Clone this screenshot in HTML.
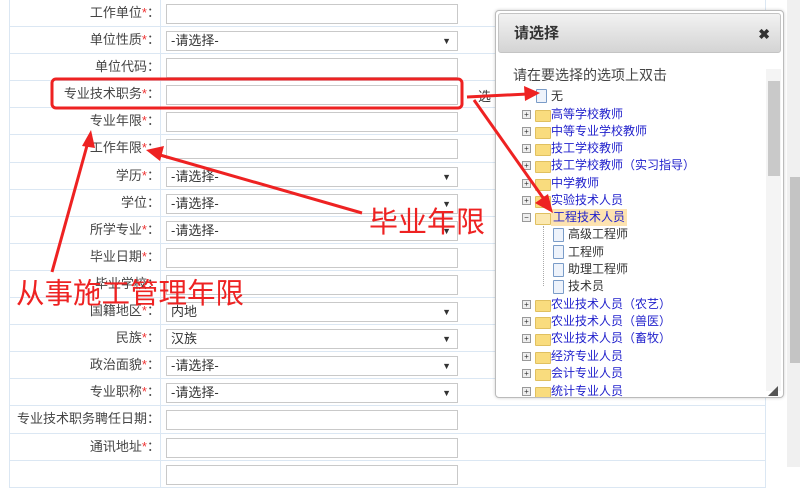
<!DOCTYPE html>
<html><head><meta charset="utf-8"><style>
*{margin:0;padding:0;box-sizing:border-box}
body{width:800px;height:467px;overflow:hidden;background:#fff;font-family:"Liberation Sans","Noto Sans CJK SC",sans-serif;font-size:13px;color:#333;position:relative}
.tbl{position:absolute;left:9px;top:0;width:757px;border-left:1px solid #dbe7f3;border-right:1px solid #dbe7f3}
.row{height:27.1px;border-bottom:1px solid #dbe7f3;position:relative}
.lab{position:absolute;left:0;width:151px;top:0;height:100%;text-align:right;line-height:26px;border-right:1px solid #dbe7f3;color:#444}
.lab b{color:#e33;font-weight:normal}
.inp{position:absolute;left:156px;top:4px;width:292px;height:20px;border:1px solid #c9c9c9;background:#fff;font-size:13px;line-height:18px;padding-left:4px}
.inp.s:after{content:"▼";position:absolute;right:6px;top:0;font-size:9px}
.dlg{position:absolute;left:495px;top:10px;width:289px;height:388px;border:1px solid #bbb;border-radius:4px;background:#fff;box-shadow:0 0 3px rgba(0,0,0,.2)}
.hd{position:absolute;left:2px;top:2px;right:2px;height:40px;background:linear-gradient(#f2f2f2,#d4d4d4);border:1px solid #c4c4c4;border-radius:3px;font-size:15px;font-weight:bold;line-height:40px;padding-left:15px;color:#333}
.hd span{position:absolute;right:10px;top:0;font-size:14px}
.tip{position:absolute;left:17px;top:54px;font-size:14px;color:#444}
.vs{position:absolute;left:270px;top:58px;width:15px;height:322px;background:#f4f4f4}
.vs i{position:absolute;left:2px;top:12px;width:12px;height:95px;background:#c9c9c9}
.t{position:absolute;font-size:12px;color:#2222cc;white-space:nowrap;line-height:17px}
.t.k{color:#333}
.pl{position:absolute;width:9px;height:9px;border:1px solid #999;background:#eee;font-size:8px;line-height:7px;text-align:center;color:#333}
.fd{position:absolute;width:16px;height:12px;background:#f9dc7e;border:1px solid #e0c060;border-radius:1px}
.pg{position:absolute;width:11px;height:14px;border:1px solid #7a9cc8;background:#eef3fb;border-radius:1px}
.sb{position:absolute;left:787px;top:0;width:13px;height:467px;background:#f0f0f0}
.sb i{position:absolute;left:3px;top:177px;width:10px;height:186px;background:#c4c4c4}
.red{position:absolute;color:#ee2222;white-space:nowrap;font-family:"Noto Sans CJK SC",sans-serif}
</style></head><body>
<div class="tbl">
<div class="row"><div class="lab">工作单位<b>*</b>：</div><div class="inp"></div></div>
<div class="row"><div class="lab">单位性质<b>*</b>：</div><div class="inp s">-请选择-</div></div>
<div class="row"><div class="lab">单位代码：</div><div class="inp"></div></div>
<div class="row"><div class="lab">专业技术职务<b>*</b>：</div><div class="inp"></div><span style="position:absolute;left:468px;top:5px">选</span></div>
<div class="row"><div class="lab">专业年限<b>*</b>：</div><div class="inp"></div></div>
<div class="row"><div class="lab">工作年限<b>*</b>：</div><div class="inp"></div></div>
<div class="row"><div class="lab">学历<b>*</b>：</div><div class="inp s">-请选择-</div></div>
<div class="row"><div class="lab">学位：</div><div class="inp s">-请选择-</div></div>
<div class="row"><div class="lab">所学专业<b>*</b>：</div><div class="inp s">-请选择-</div></div>
<div class="row"><div class="lab">毕业日期<b>*</b>：</div><div class="inp"></div></div>
<div class="row"><div class="lab">毕业学校：</div><div class="inp"></div></div>
<div class="row"><div class="lab">国籍地区<b>*</b>：</div><div class="inp s">内地</div></div>
<div class="row"><div class="lab">民族<b>*</b>：</div><div class="inp s">汉族</div></div>
<div class="row"><div class="lab">政治面貌<b>*</b>：</div><div class="inp s">-请选择-</div></div>
<div class="row"><div class="lab">专业职称<b>*</b>：</div><div class="inp s">-请选择-</div></div>
<div class="row"><div class="lab">专业技术职务聘任日期：</div><div class="inp"></div></div>
<div class="row"><div class="lab">通讯地址<b>*</b>：</div><div class="inp"></div></div>
<div class="row"><div class="lab"></div><div class="inp"></div></div>
</div>
<div class="sb"><i></i></div>
<div class="dlg">
<div class="hd">请选择<span>✖</span></div>
<div class="tip">请在要选择的选项上双击</div>
<div class="vs"><i></i></div>
<div class="pg" style="left:40px;top:78px"></div><div class="t k" style="left:55px;top:77px">无</div>
<div class="pl" style="left:26px;top:99px">+</div><div class="fd" style="left:39px;top:99px"></div><div class="t" style="left:55px;top:95px">高等学校教师</div>
<div class="pl" style="left:26px;top:116px">+</div><div class="fd" style="left:39px;top:116px"></div><div class="t" style="left:55px;top:112px">中等专业学校教师</div>
<div class="pl" style="left:26px;top:133px">+</div><div class="fd" style="left:39px;top:133px"></div><div class="t" style="left:55px;top:129px">技工学校教师</div>
<div class="pl" style="left:26px;top:150px">+</div><div class="fd" style="left:39px;top:150px"></div><div class="t" style="left:55px;top:146px">技工学校教师（实习指导）</div>
<div class="pl" style="left:26px;top:168px">+</div><div class="fd" style="left:39px;top:168px"></div><div class="t" style="left:55px;top:164px">中学教师</div>
<div class="pl" style="left:26px;top:185px">+</div><div class="fd" style="left:39px;top:185px"></div><div class="t" style="left:55px;top:181px">实验技术人员</div>
<div class="pl" style="left:26px;top:202px">−</div><div class="fd" style="left:39px;top:202px;background:#fbe8b0"></div><div class="t" style="left:55px;top:198px;background:#fde3b0;padding:0 2px">工程技术人员</div>
<div style="position:absolute;left:47px;top:215px;width:1px;height:60px;border-left:1px dotted #aaa"></div>
<div class="pg" style="left:57px;top:217px"></div><div class="t k" style="left:72px;top:215px">高级工程师</div>
<div class="pg" style="left:57px;top:234px"></div><div class="t k" style="left:72px;top:233px">工程师</div>
<div class="pg" style="left:57px;top:252px"></div><div class="t k" style="left:72px;top:250px">助理工程师</div>
<div class="pg" style="left:57px;top:269px"></div><div class="t k" style="left:72px;top:267px">技术员</div>
<div class="pl" style="left:26px;top:289px">+</div><div class="fd" style="left:39px;top:289px"></div><div class="t" style="left:55px;top:285px">农业技术人员（农艺）</div>
<div class="pl" style="left:26px;top:306px">+</div><div class="fd" style="left:39px;top:306px"></div><div class="t" style="left:55px;top:302px">农业技术人员（兽医）</div>
<div class="pl" style="left:26px;top:323px">+</div><div class="fd" style="left:39px;top:323px"></div><div class="t" style="left:55px;top:319px">农业技术人员（畜牧）</div>
<div class="pl" style="left:26px;top:341px">+</div><div class="fd" style="left:39px;top:341px"></div><div class="t" style="left:55px;top:337px">经济专业人员</div>
<div class="pl" style="left:26px;top:358px">+</div><div class="fd" style="left:39px;top:358px"></div><div class="t" style="left:55px;top:354px">会计专业人员</div>
<div style="position:absolute;left:0;top:372px;width:270px;height:14px;overflow:hidden"><div class="pl" style="left:26px;top:4px">+</div><div class="fd" style="left:39px;top:4px"></div><div class="t" style="left:55px;top:0">统计专业人员</div></div>
<div style="position:absolute;left:272px;top:372px;font-size:10px;color:#555">◢</div>
</div>
<div class="red" style="left:369px;top:199px;font-size:29px">毕业年限</div>
<div class="red" style="left:16px;top:271px;font-size:28.5px">从事施工管理年限</div>
<svg width="800" height="467" style="position:absolute;left:0;top:0">
<rect x="52" y="79" width="410" height="29" rx="4" fill="none" stroke="#ee2222" stroke-width="3"/>
<g stroke="#ee2222" stroke-width="3" fill="#ee2222">
<line x1="467" y1="97" x2="528" y2="94"/><polygon points="540,93 524,86 525,101" stroke="none"/>
<line x1="474" y1="100" x2="546" y2="202"/><polygon points="553,213 535,203 548,194" stroke="none"/>
<line x1="362" y1="213" x2="160" y2="155"/><polygon points="146,150 164,146 160,161" stroke="none"/>
<line x1="52" y1="272" x2="88" y2="142"/><polygon points="91,130 82,146 95,148" stroke="none"/>
</g>
</svg>
</body></html>
